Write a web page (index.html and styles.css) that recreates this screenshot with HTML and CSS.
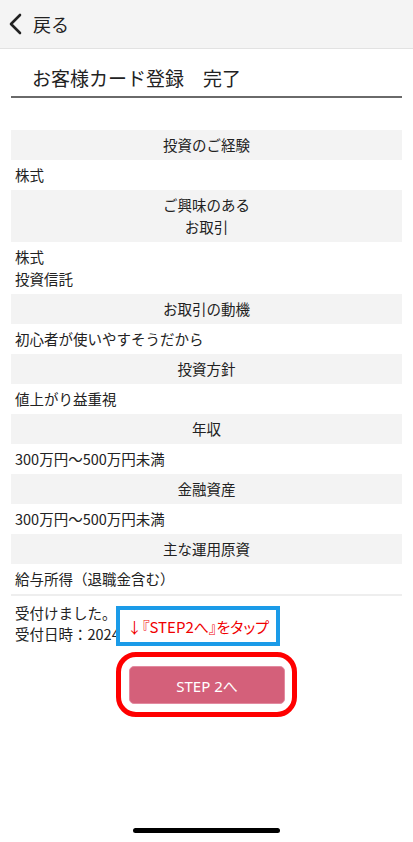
FILE: index.html
```html
<!DOCTYPE html>
<html lang="ja">
<head>
  <meta charset="UTF-8">
  <meta name="viewport" content="width=device-width, initial-scale=1.0">
  <title>お客様カード登録 完了</title>
  <link rel="stylesheet" href="styles.css">
</head>
<body>
  <!-- ヘッダー -->
  <div class="top-bar">
    <svg class="back-icon" width="16" height="22" viewBox="0 0 16 22">
      <path d="M12 2 L3 11 L12 20" fill="none" stroke="#222" stroke-width="2.6" stroke-linecap="round" stroke-linejoin="round"/>
    </svg>
    <span class="back-label">戻る</span>
  </div>

  <div class="page-title">お客様カード登録　完了</div>

  <!-- 登録内容 -->
  <div class="summary">
    <div class="summary-head">投資のご経験</div>
    <div class="summary-value">株式</div>
    <div class="summary-head">ご興味のある<br>お取引</div>
    <div class="summary-value">株式<br>投資信託</div>
    <div class="summary-head">お取引の動機</div>
    <div class="summary-value">初心者が使いやすそうだから</div>
    <div class="summary-head">投資方針</div>
    <div class="summary-value">値上がり益重視</div>
    <div class="summary-head">年収</div>
    <div class="summary-value">300万円～500万円未満</div>
    <div class="summary-head">金融資産</div>
    <div class="summary-value">300万円～500万円未満</div>
    <div class="summary-head">主な運用原資</div>
    <div class="summary-value">給与所得（退職金含む）</div>
  </div>

  <div class="notice">
    受付けました。<br>
    受付日時：2024
    <div class="callout">↓『STEP2へ』をタップ</div>
  </div>

  <div class="step-ring">
    <button class="step-button">STEP 2へ</button>
  </div>

  <div class="home-indicator"></div>
</body>
</html>
```

FILE: styles.css
```css
body {
  margin: 0;
  padding: 0;
  background-color: #fff;
  color: #222;
  font-family: "Noto Sans CJK JP", "Noto Sans", sans-serif;
  font-size: 14.5px;
}

.top-bar {
  display: flex;
  align-items: center;
  height: 48px;
  padding-left: 8px;
  background-color: #f4f4f4;
  border-bottom: 1px solid #e2e2e2;
}

.back-icon {
  display: block;
  margin-right: 9px;
}

.back-label {
  font-size: 18px;
}

.page-title {
  margin: 0 11px;
  padding: 17px 0 6px 21px;
  font-size: 19px;
  line-height: 24px;
  border-bottom: 2px solid #6a6a6a;
}

.summary {
  margin: 32px 11px 0;
  border-bottom: 2px solid #eeeeee;
}

.summary-head {
  padding: 4px 0;
  line-height: 22px;
  text-align: center;
  background-color: #f3f3f3;
}

.summary-value {
  padding: 4px 4px;
  line-height: 22px;
}

.notice {
  position: relative;
  margin: 0 11px;
  padding: 6px 4px 0;
  line-height: 21px;
  white-space: nowrap;
}

.callout {
  position: absolute;
  top: 10px;
  left: 105px;
  width: 156px;
  height: 32px;
  display: flex;
  align-items: center;
  justify-content: center;
  background-color: #fff;
  border: 4px solid #1b9be8;
  color: #f00000;
  font-size: 15px;
  font-feature-settings: "palt";
}

.step-ring {
  width: 156px;
  margin: 8px auto 0;
  padding: 9px 7px 8px 8px;
  border: 5px solid #ff0000;
  border-radius: 20px;
}

.step-button {
  display: block;
  width: 100%;
  height: 38px;
  border: 1px solid #e38aa0;
  border-radius: 5px;
  background-color: #d4607a;
  color: #fff;
  font-family: "Noto Sans", "Noto Sans CJK JP", sans-serif;
  font-size: 15px;
}

.home-indicator {
  position: fixed;
  left: 133px;
  bottom: 9px;
  width: 147px;
  height: 5px;
  border-radius: 3px;
  background-color: #000;
}
```
